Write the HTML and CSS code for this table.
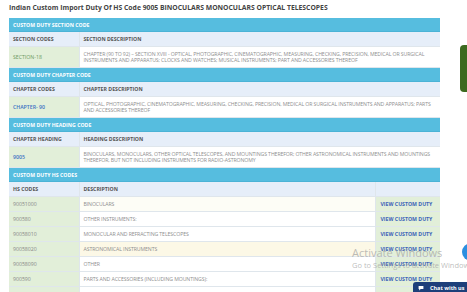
FILE: index.html
```html
<!DOCTYPE html>
<html>
<head>
<meta charset="utf-8">
<link rel="stylesheet" href="styles.css">
</head>
<body>
<div class="page">
  <h1 class="title">Indian Custom Import Duty Of HS Code 9005 BINOCULARS MONOCULARS OPTICAL TELESCOPES</h1>

  <table class="duty">
    <colgroup><col class="w1"><col></colgroup>
    <tr class="band"><td colspan="2">CUSTOM DUTY SECTION CODE</td></tr>
    <tr class="colhead"><td class="c1">SECTION CODES</td><td>SECTION DESCRIPTION</td></tr>
    <tr class="data"><td class="c1 code green-text">SECTION-18</td><td class="desc">CHAPTER (90 TO 92) – SECTION XVIII - OPTICAL, PHOTOGRAPHIC, CINEMATOGRAPHIC, MEASURING, CHECKING, PRECISION, MEDICAL OR SURGICAL INSTRUMENTS AND APPARATUS; CLOCKS AND WATCHES; MUSICAL INSTRUMENTS; PART AND ACCESSORIES THEREOF</td></tr>

    <tr class="band"><td colspan="2">CUSTOM DUTY CHAPTER CODE</td></tr>
    <tr class="colhead"><td class="c1">CHAPTER CODES</td><td>CHAPTER DESCRIPTION</td></tr>
    <tr class="data"><td class="c1 code link">CHAPTER- 90</td><td class="desc">OPTICAL, PHOTOGRAPHIC, CINEMATOGRAPHIC, MEASURING, CHECKING, PRECISION, MEDICAL OR SURGICAL INSTRUMENTS AND APPARATUS; PARTS AND ACCESSORIES THEREOF</td></tr>

    <tr class="band"><td colspan="2">CUSTOM DUTY HEADING CODE</td></tr>
    <tr class="colhead"><td class="c1">CHAPTER HEADING</td><td>HEADING DESCRIPTION</td></tr>
    <tr class="data"><td class="c1 code link">9005</td><td class="desc">BINOCULARS, MONOCULARS, OTHER OPTICAL TELESCOPES, AND MOUNTINGS THEREFOR; OTHER ASTRONOMICAL INSTRUMENTS AND MOUNTINGS THEREFOR, BUT NOT INCLUDING INSTRUMENTS FOR RADIO-ASTRONOMY</td></tr>
  </table>

  <table class="duty hs">
    <colgroup><col class="w1"><col><col class="w3"></colgroup>
    <tr class="band"><td colspan="3">CUSTOM DUTY HS CODES</td></tr>
    <tr class="colhead"><td class="c1">HS CODES</td><td>DESCRIPTION</td><td class="c3"></td></tr>
    <tr class="row tint"><td class="c1 code">90051000</td><td class="desc">BINOCULARS</td><td class="c3 view">VIEW CUSTOM DUTY</td></tr>
    <tr class="row"><td class="c1 code">900580</td><td class="desc">OTHER INSTRUMENTS:</td><td class="c3 view">VIEW CUSTOM DUTY</td></tr>
    <tr class="row"><td class="c1 code">90058010</td><td class="desc">MONOCULAR AND REFRACTING TELESCOPES</td><td class="c3 view">VIEW CUSTOM DUTY</td></tr>
    <tr class="row hover"><td class="c1 code">90058020</td><td class="desc">ASTRONOMICAL INSTRUMENTS</td><td class="c3 view">VIEW CUSTOM DUTY</td></tr>
    <tr class="row"><td class="c1 code">90058090</td><td class="desc">OTHER</td><td class="c3 view">VIEW CUSTOM DUTY</td></tr>
    <tr class="row"><td class="c1 code">900590</td><td class="desc">PARTS AND ACCESSORIES (INCLUDING MOUNTINGS):</td><td class="c3 view">VIEW CUSTOM DUTY</td></tr>
    <tr class="row"><td class="c1 code">90059010</td><td class="desc">FOR BINOCULARS, MONOCULARS AND OTHER OPTICAL TELESCOPES</td><td class="c3 view">VIEW CUSTOM DUTY</td></tr>
  </table>
</div>

<div class="side-tab"></div>
<div class="fab"></div>
<div class="watermark">
  <div class="wm-big">Activate Windows</div>
  <div class="wm-small">Go to Settings to activate Windows.</div>
</div>
<div class="chat">
  <svg class="chat-icon" viewBox="0 0 10 10" width="6" height="6"><path d="M1 1.5h8v5H4.5L2 9V6.5H1z" fill="#fff"/></svg>
  <span>Chat with us</span>
</div>
</body>
</html>
```

FILE: styles.css
```css
html, body {
  margin: 0;
  padding: 0;
  background: #ffffff;
  overflow: hidden;
  height: 292px;
}
body {
  font-family: "Open Sans", "Liberation Sans", sans-serif;
  color: #777;
}
.page {
  padding: 3px 0 0 9px;
  width: 431px;
}
.title {
  margin: 0 0 5px 0;
  font-size: 6.8px;
  line-height: 10px;
  font-weight: 700;
  color: #444;
  white-space: nowrap;
}
.duty {
  width: 431px;
  border-collapse: collapse;
  table-layout: fixed;
  font-size: 5.2px;
}
.w1 { width: 70px; }
.w3 { width: 64px; }
.duty td {
  padding: 0 4px;
  border-bottom: 1px solid #dfe6ec;
  vertical-align: middle;
  overflow: hidden;
}
.c1 {
  border-right: 1px solid #dfe6ec;
}
.c3 {
  border-left: 1px solid #dfe6ec;
  white-space: nowrap;
}
.band td {
  background: #56bddf;
  color: #fff;
  font-weight: 700;
  height: 13px;
  border-bottom: 1px solid #4bb3d6;
}
.colhead td {
  background: #e6eef9;
  color: #555;
  font-weight: 700;
  height: 14px;
}
.data td {
  height: 20px;
  line-height: 6.5px;
  background: #fff;
}
.data .code {
  background: #e2efd9;
}
.green-text { color: #6e9a5e; }
.link { color: #3b72c4; font-weight: 600; }
.desc {
  color: #8f8f8f;
  font-weight: 400;
  letter-spacing: -0.1px;
}
.duty.hs .row td {
  height: 14px;
  background: #fff;
}
.duty.hs .row .code {
  background: #e2efd9;
  color: #888;
}
.duty.hs .row.tint .desc { background: #fdfdf6; }
.duty.hs .row.hover .desc { background: #fcf8e6; }
.duty.hs .row .view {
  background: #e2efd9;
  color: #3b64b8;
  font-weight: 700;
}
.side-tab {
  position: absolute;
  left: 460px;
  top: 45px;
  width: 14px;
  height: 47px;
  background: #3c6a1f;
  border-radius: 4px;
}
.fab {
  position: absolute;
  left: 462px;
  top: 243px;
  width: 18px;
  height: 18px;
  border-radius: 50%;
  background: #2b8fe0;
}
.watermark {
  position: absolute;
  left: 352px;
  top: 246px;
  color: rgba(160, 160, 160, 0.7);
  white-space: nowrap;
  pointer-events: none;
  font-family: "Open Sans", "Liberation Sans", sans-serif;
}
.wm-big {
  font-size: 11px;
  line-height: 13px;
}
.wm-small {
  font-size: 7.5px;
  line-height: 10px;
  margin-top: 1px;
}
.chat {
  position: absolute;
  left: 413px;
  top: 282px;
  width: 60px;
  height: 12px;
  background: #1d3f7a;
  border-radius: 3px 0 0 0;
  display: flex;
  align-items: center;
  gap: 6px;
  padding-left: 5px;
  box-sizing: border-box;
  color: #fff;
  font-size: 5.5px;
  font-weight: 700;
}
.chat-icon { display: block; }
```
